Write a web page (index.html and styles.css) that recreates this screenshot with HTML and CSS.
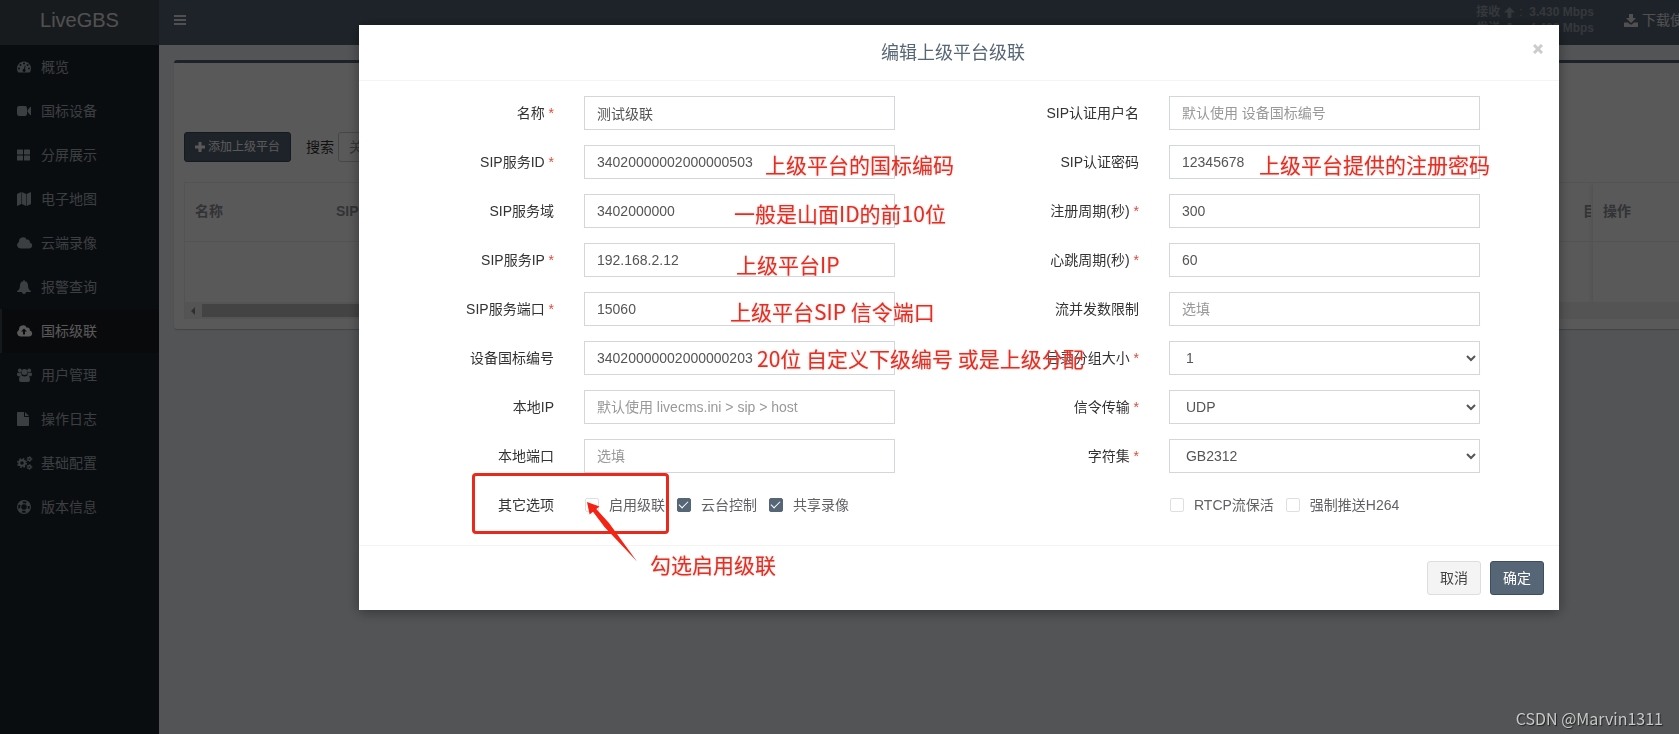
FILE: index.html
```html
<!DOCTYPE html>
<html lang="zh-CN">
<head>
<meta charset="utf-8">
<title>LiveGBS</title>
<link rel="stylesheet" href="styles.css">
</head>
<body>
<div class="app">
  <aside class="sidebar">
    <a class="logo" href="#">LiveGBS</a>
    <nav class="menu">
      <a class="menu-item" href="#"><svg class="icon" viewBox="0 0 16 14"><path fill-rule="evenodd" d="M0 8.500a7 7 0 0 1 14 0c0 1.300-.4 2.600-1 3.600-.1.300-.4.400-.6.400H1.600c-.2 0-.5-.1-.6-.4-.6-1-1-2.300-1-3.600zM1 8.500a1 1 0 1 0 2 0a1 1 0 1 0-2 0zM2.500 5a1 1 0 1 0 2 0a1 1 0 1 0-2 0zM6 3.500a1 1 0 1 0 2 0a1 1 0 1 0-2 0zM9.600 5a1 1 0 1 0 2 0a1 1 0 1 0-2 0zM11 8.500a1 1 0 1 0 2 0a1 1 0 1 0-2 0zM7.800 5.800l-.9 3a1.500 1.500 0 1 0 1 .2l.8-3z"/></svg><span>概览</span></a>
      <a class="menu-item" href="#"><svg class="icon" viewBox="0 0 16 14"><path d="M2.200 2h5.600a2.200 2.200 0 0 1 2.200 2.200v5.600a2.200 2.200 0 0 1-2.200 2.200H2.200A2.200 2.200 0 0 1 0 9.800V4.200A2.200 2.200 0 0 1 2.200 2zM10.500 6.200l2.700-3.300q.8-.5.8.4v7.400q0 .9-.8.4l-2.700-3.300z"/></svg><span>国标设备</span></a>
      <a class="menu-item" href="#"><svg class="icon" viewBox="0 0 16 14"><path d="M.5 1.500h5q.5 0 .5.500v4q0 .5-.5.500h-5Q0 6.500 0 6V2q0-.5.500-.5zM7.500 1.500h5q.5 0 .5.500v4q0 .5-.5.500h-5Q7 6.500 7 6V2q0-.5.500-.5zM.5 7.500h5q.5 0 .5.500v4q0 .5-.5.500h-5Q0 12.500 0 12V8q0-.5.500-.5zM7.500 7.500h5q.5 0 .5.500v4q0 .5-.5.500h-5Q7 12.500 7 12V8q0-.5.500-.5z"/></svg><span>分屏展示</span></a>
      <a class="menu-item" href="#"><svg class="icon" viewBox="0 0 16 14"><path d="M0 2.500Q0 2 .5 1.700L4.200 0v12L.7 13.800Q0 14 0 13.500zM4.800 0l4.300 2v12l-4.300-2zM9.700 2L13.300.2q.7-.2.700.5v11q0 .4-.4.600L9.700 14z"/></svg><span>电子地图</span></a>
      <a class="menu-item" href="#"><svg class="icon" viewBox="0 0 16 14"><path d="M3.500 12.500a3.500 3.500 0 0 1-1.500-6.600A4.100 4.100 0 0 1 9.800 3.800a2.200 2.200 0 0 1 3 2.600 3.100 3.100 0 0 1-.8 6.100z"/></svg><span>云端录像</span></a>
      <a class="menu-item" href="#"><svg class="icon" viewBox="0 0 16 14"><path d="M7 0q.9 0 .8 1.200C10.300 1.700 11 3.600 11 5.500c0 3 1 4.500 3 5.500 0 .6-.4 1-1 1H9a2 2 0 0 1-4 0H1c-.6 0-1-.4-1-1 2-1 3-2.500 3-5.500 0-1.900.7-3.800 3.200-4.300Q6.100 0 7 0z"/></svg><span>报警查询</span></a>
      <a class="menu-item active" href="#"><svg class="icon" viewBox="0 0 16 14"><path fill-rule="evenodd" d="M3.500 12.500a3.500 3.500 0 0 1-1.500-6.600A4.100 4.100 0 0 1 9.800 3.800a2.200 2.200 0 0 1 3 2.600 3.100 3.100 0 0 1-.8 6.100zM7 4.500L4 7.600h2v3h2v-3h2z"/></svg><span>国标级联</span></a>
      <a class="menu-item" href="#"><svg class="icon" viewBox="0 0 16 14"><circle cx="2.800" cy="2.500" r="1.900"/><circle cx="12.200" cy="2.500" r="1.900"/><circle cx="7.500" cy="4" r="3"/><path d="M1 4.500q1.600 1 3 0 0 1.800 1 2.700-1.200.2-1.800 1.100H1.500Q0 8.200 0 6.800 0 4.500 1 4.500zM14 4.500q-1.600 1-3 0 0 1.800-1 2.700 1.200.2 1.800 1.100h1.700Q15 8.200 15 6.800q0-2.300-1-2.300zM4.800 7.500q2.700 2 5.400 0 2.800.3 2.800 4.500 0 2-2 2H4q-2 0-2-2 0-4.200 2.800-4.500z"/></svg><span>用户管理</span></a>
      <a class="menu-item" href="#"><svg class="icon" viewBox="0 0 16 14"><path d="M.8 0H7v4.200q0 .8.800.8H12v8.200q0 .8-.8.800H.8q-.8 0-.8-.8V.8Q0 0 .8 0zM8 0l4 4H8z"/></svg><span>操作日志</span></a>
      <a class="menu-item" href="#"><svg class="icon" viewBox="0 0 16 14"><g class="stroke"><circle cx="5" cy="7" r="2.800" stroke-width="2"/><circle cx="5" cy="7" r="4.300" stroke-width="1.400" stroke-dasharray="1.700 1.700"/><circle cx="12.400" cy="3" r="1.500" stroke-width="1.300"/><circle cx="12.400" cy="3" r="2.400" stroke-width=".9" stroke-dasharray="1.200 1.300"/><circle cx="12.400" cy="11" r="1.500" stroke-width="1.300"/><circle cx="12.400" cy="11" r="2.400" stroke-width=".9" stroke-dasharray="1.200 1.300"/></g></svg><span>基础配置</span></a>
      <a class="menu-item" href="#"><svg class="icon" viewBox="0 0 16 14"><g class="stroke"><circle cx="7" cy="7" r="6.400" stroke-width="1.100"/><circle cx="7" cy="7" r="3.400" stroke-width="1"/><circle cx="7" cy="7" r="4.900" stroke-width="2.600" stroke-dasharray="3.850 3.850" stroke-dashoffset="-1.920"/></g></svg><span>版本信息</span></a>
    </nav>
  </aside>
  <div class="main">
    <header class="navbar">
      <button class="toggle" type="button" aria-label="菜单"><svg class="bars" viewBox="0 0 12 10"><path d="M0 0h12v2H0zM0 4h12v2H0zM0 8h12v2H0z"/></svg></button>
      <div class="rates">
        <div class="rate"><span>接收</span><svg class="arrow" viewBox="0 0 12 12"><path d="M6 0l6 6H8V12H4V6H0z"/></svg><span class="colon">:</span><span>3.430 Mbps</span></div>
        <div class="rate"><span>发送</span><svg class="arrow" viewBox="0 0 12 12"><path d="M6 12l6-6H8V0H4v6H0z"/></svg><span class="colon">:</span><span>4.432 Mbps</span></div>
      </div>
      <a class="download" href="#"><svg class="down-icon" viewBox="0 0 14 13"><path d="M5 0h4v4h3L7 9 2 4h3zM0 8.500h4l1.600 1.600q1.400 1 2.800 0L10 8.500h4V13H0z"/></svg><span>下载使</span></a>
    </header>
    <main class="content">
      <section class="card">
        <div class="toolbar">
          <button class="btn-add" type="button"><svg class="plus" viewBox="0 0 10 10"><path d="M3.500 0h3v3.500H10v3H6.500V10h-3V6.500H0v-3h3.500z"/></svg>添加上级平台</button>
          <label class="search-label" for="search">搜索</label>
          <input class="search" id="search" type="text" placeholder="关键字">
        </div>
        <div class="table-wrap">
          <table class="table">
            <thead><tr><th class="col-name">名称</th><th>SIP服务ID</th><th class="col-cut"><div class="cut">目录</div></th><th class="col-op">操作</th></tr></thead>
            <tbody><tr><td></td><td></td><td></td><td class="col-op"></td></tr></tbody>
          </table>
          <div class="scrollbar"><svg class="scroll-arrow" viewBox="0 0 4 8"><path d="M4 0v8L0 4z"/></svg><div class="thumb"></div></div>
        </div>
      </section>
    </main>
  </div>
</div>

<div class="backdrop">
  <form class="modal" role="dialog" aria-labelledby="title">
    <div class="modal-header">
      <h4 class="modal-title" id="title">编辑上级平台级联</h4>
      <button class="close" type="button" aria-label="关闭"><svg class="cross" viewBox="0 0 10 10"><path d="M1 1l8 8M9 1l-8 8"/></svg></button>
    </div>
    <div class="modal-body">
      <div class="column">
        <div class="row"><label for="name">名称 <span class="req">*</span></label><div class="field"><input class="control" id="name" type="text" value="测试级联"></div></div>
        <div class="row"><label for="sid">SIP服务ID <span class="req">*</span></label><div class="field"><input class="control" id="sid" type="text" value="34020000002000000503"></div></div>
        <div class="row"><label for="realm">SIP服务域</label><div class="field"><input class="control" id="realm" type="text" value="3402000000"></div></div>
        <div class="row"><label for="sip">SIP服务IP <span class="req">*</span></label><div class="field"><input class="control" id="sip" type="text" value="192.168.2.12"></div></div>
        <div class="row"><label for="port">SIP服务端口 <span class="req">*</span></label><div class="field"><input class="control" id="port" type="text" value="15060"></div></div>
        <div class="row"><label for="dev">设备国标编号</label><div class="field"><input class="control" id="dev" type="text" value="34020000002000000203"></div></div>
        <div class="row"><label for="lip">本地IP</label><div class="field"><input class="control" id="lip" type="text" placeholder="默认使用 livecms.ini &gt; sip &gt; host"></div></div>
        <div class="row"><label for="lport">本地端口</label><div class="field"><input class="control" id="lport" type="text" placeholder="选填"></div></div>
        <div class="row"><span class="row-label">其它选项</span><div class="field options">
          <label class="option"><input class="check" type="checkbox">启用级联</label>
          <label class="option"><input class="check" type="checkbox" checked>云台控制</label>
          <label class="option"><input class="check" type="checkbox" checked>共享录像</label>
        </div></div>
      </div>
      <div class="column">
        <div class="row"><label for="user">SIP认证用户名</label><div class="field"><input class="control" id="user" type="text" placeholder="默认使用 设备国标编号"></div></div>
        <div class="row"><label for="pass">SIP认证密码</label><div class="field"><input class="control" id="pass" type="text" value="12345678"></div></div>
        <div class="row"><label for="reg">注册周期(秒) <span class="req">*</span></label><div class="field"><input class="control" id="reg" type="text" value="300"></div></div>
        <div class="row"><label for="beat">心跳周期(秒) <span class="req">*</span></label><div class="field"><input class="control" id="beat" type="text" value="60"></div></div>
        <div class="row"><label for="limit">流并发数限制</label><div class="field"><input class="control" id="limit" type="text" placeholder="选填"></div></div>
        <div class="row"><label for="group">目录分组大小 <span class="req">*</span></label><div class="field"><select class="control" id="group"><option>1</option></select></div></div>
        <div class="row"><label for="trans">信令传输 <span class="req">*</span></label><div class="field"><select class="control" id="trans"><option>UDP</option></select></div></div>
        <div class="row"><label for="chars">字符集 <span class="req">*</span></label><div class="field"><select class="control" id="chars"><option>GB2312</option></select></div></div>
        <div class="row"><span class="row-label"></span><div class="field options">
          <label class="option"><input class="check" type="checkbox">RTCP流保活</label>
          <label class="option"><input class="check" type="checkbox">强制推送H264</label>
        </div></div>
      </div>
    </div>
    <div class="modal-footer">
      <button class="btn" type="button">取消</button>
      <button class="btn primary" type="submit">确定</button>
    </div>

    <div class="note note-id">上级平台的国标编码</div>
    <div class="note note-realm">一般是山面ID的前10位</div>
    <div class="note note-ip">上级平台IP</div>
    <div class="note note-port">上级平台SIP 信令端口</div>
    <div class="note note-dev">20位 自定义下级编号 或是上级分配</div>
    <div class="note note-pass">上级平台提供的注册密码</div>
    <div class="note note-check">勾选启用级联</div>
    <div class="mark"></div>
    <svg class="pointer" viewBox="0 0 52 62"><path d="M1 1l12.500 4.500-3.200 2.400L23 22l28 38.500L18.500 26 7 10.800 3.600 13.500z"/></svg>
  </form>
</div>
<div class="watermark">CSDN @Marvin1311</div>
</body>
</html>
```
FILE: styles.css
```css
* { box-sizing: border-box; }

body {
  margin: 0;
  height: 100vh;
  overflow: hidden;
  font: 14px/20px "Liberation Sans", "Noto Sans CJK SC", sans-serif;
  color: #333;
}

a { color: inherit; text-decoration: none; }
button, input, select { font: inherit; margin: 0; }
svg { display: block; fill: currentColor; flex: none; }

.app { display: flex; height: 100vh; background: #ecf0f5; }

/* sidebar */
.sidebar { flex: none; width: 159px; background: #1f262e; }
.logo {
  display: block;
  height: 45px;
  line-height: 40px;
  font-size: 20px;
  text-align: center;
  color: #e6e6e6;
  background: #424f58;
}
.menu-item {
  display: flex;
  align-items: center;
  gap: 8px;
  height: 44px;
  padding-left: 15px;
  border-left: 2px solid transparent;
  color: #a9b4ba;
}
.menu-item.active { color: #fff; background: #1b1e21; border-left-color: #3c4852; }
.icon { width: 16px; height: 14px; }
.stroke { fill: none; stroke: currentColor; }

/* top bar */
.main { flex: 1; min-width: 0; overflow: hidden; }
.navbar {
  display: flex;
  height: 45px;
  background: #566676;
  color: #e6e6e6;
  overflow: hidden;
}
.toggle {
  width: 42px;
  height: 40px;
  padding: 0 15px;
  border: 0;
  background: none;
  color: #e6e6e6;
}
.bars { width: 12px; height: 10px; }
.rates {
  margin-left: auto;
  padding-top: 4px;
  font-size: 12px;
  line-height: 16px;
  font-weight: bold;
  color: #98a1ab;
}
.rate { display: flex; align-items: center; height: 16px; gap: 4px; }
.arrow { width: 11px; height: 11px; }
.colon { width: 6px; font-weight: normal; }
.download {
  display: flex;
  align-items: center;
  gap: 4px;
  width: 55px;
  height: 40px;
  margin-left: 30px;
  white-space: nowrap;
}
.down-icon { width: 14px; height: 13px; }

/* page */
.content { padding: 15px 0 0 15px; }
.card {
  padding: 69px 0 10px 10px;
  background: #fff;
  border-top: 3px solid #566676;
  border-radius: 3px 0 0 3px;
  box-shadow: 0 1px 1px rgba(0, 0, 0, .2);
}
.toolbar { display: flex; align-items: center; height: 30px; margin-bottom: 20px; }
.btn-add {
  display: flex;
  align-items: center;
  gap: 3px;
  height: 30px;
  padding: 0 10px;
  font-size: 12px;
  color: #fff;
  background: #566676;
  border: 1px solid #3c4a58;
  border-radius: 3px;
}
.plus { width: 10px; height: 10px; }
.search-label { margin: 0 4px 0 15px; }
.search {
  width: 150px;
  height: 30px;
  padding: 5px 10px;
  border: 1px solid #ccc;
  border-radius: 3px;
  background: #fff;
}
.table-wrap { border-top: 1px solid #ebeef5; border-left: 1px solid #ebeef5; }
.table { width: 100%; border-collapse: separate; border-spacing: 0; table-layout: fixed; }
.table th {
  height: 59px;
  padding: 0 10px 2px;
  text-align: left;
  color: #909399;
  border-bottom: 1px solid #ebeef5;
}
.table td { height: 60px; }
.table .col-name { width: 141px; }
.table .col-cut { width: 18px; }
.cut { width: 8px; overflow: hidden; white-space: nowrap; }
.table .col-op { width: 86px; box-shadow: -1px 0 5px rgba(0, 0, 0, .12); clip-path: inset(0 0 0 -6px); }
.scrollbar { display: flex; align-items: center; height: 17px; padding: 0 6px; gap: 7px; background: #f1f1f1; }
.scroll-arrow { width: 4px; height: 8px; color: #888; }
.thumb { width: 75%; height: 13px; background: #c1c1c1; }

/* dialog */
.backdrop {
  position: fixed;
  inset: 0;
  padding: 25px 120px 0 359px;
  background: rgba(0, 0, 0, .65);
}
.modal { position: relative; background: #fff; box-shadow: 0 2px 12px rgba(0, 0, 0, .4); }
.modal-header {
  display: flex;
  height: 56px;
  padding: 15px;
  border-bottom: 1px solid #f4f4f4;
}
.modal-title {
  flex: 1;
  margin: 0;
  font-size: 18px;
  line-height: 27px;
  font-weight: normal;
  text-align: center;
  color: #566676;
}
.close { display: flex; width: 12px; height: 18px; padding: 4px 1px; border: 0; background: none; color: #ccc; }
.cross { width: 10px; height: 10px; fill: none; stroke: currentColor; stroke-width: 3; }
.modal-body { display: flex; padding: 15px; }
.column { flex: 1; }
.row { display: flex; margin-bottom: 15px; }
.row > label, .row-label { width: 33.333%; padding: 7px 15px 0; text-align: right; }
.req { color: #dd4b39; }
.field { width: 58.333%; padding: 0 15px; }
.control {
  display: block;
  width: 100%;
  height: 34px;
  padding: 6px 12px;
  color: #555;
  background: #fff;
  border: 1px solid #d2d6de;
  border-radius: 0;
}
.control::placeholder, .search::placeholder { color: #999; }
.options { display: flex; gap: 12px; padding: 7px 16px 0; white-space: nowrap; }
.option { display: flex; align-items: center; gap: 10px; color: #606266; }
.check {
  appearance: none;
  display: grid;
  place-items: center;
  width: 14px;
  height: 14px;
  border: 1px solid #dcdfe6;
  border-radius: 2px;
  background: #fff;
}
.check:checked { background: #566676; border-color: #566676; }
.check:checked::after {
  content: "";
  width: 8px;
  height: 4px;
  border: solid #fff;
  border-width: 0 0 1px 1px;
  transform: rotate(-45deg);
  margin-bottom: 3px;
}
.modal-footer {
  display: flex;
  justify-content: flex-end;
  gap: 9px;
  padding: 15px;
  border-top: 1px solid #f4f4f4;
}
.btn {
  height: 34px;
  padding: 6px 12px;
  color: #444;
  background: #f4f4f4;
  border: 1px solid #ddd;
  border-radius: 3px;
}
.btn.primary { color: #fff; background: #566676; border-color: #3f4e5d; }

/* hand-placed annotations over the dialog */
.note {
  position: absolute;
  font: 21px/28px "Noto Sans CJK SC", sans-serif;
  color: #e03024;
  white-space: nowrap;
  text-shadow: 0 0 2px #fbb;
}
.note-id { left: 406px; top: 125px; }
.note-realm { left: 375px; top: 174px; }
.note-ip { left: 377px; top: 225px; }
.note-port { left: 371px; top: 272px; }
.note-dev { left: 398px; top: 319px; }
.note-pass { left: 900px; top: 125px; }
.note-check { left: 291px; top: 525px; }
.mark {
  position: absolute;
  left: 113px;
  top: 448px;
  width: 197px;
  height: 61px;
  border: 3px solid #e8291c;
  border-radius: 4px;
}
.pointer { position: absolute; left: 227px; top: 476px; width: 52px; height: 62px; color: #f42314; }

.watermark {
  position: fixed;
  right: 16px;
  bottom: 6px;
  font: 16px/20px "Noto Sans CJK SC", sans-serif;
  color: #c8c8c8;
  text-shadow: 1px 1px 1px #222;
}
```
